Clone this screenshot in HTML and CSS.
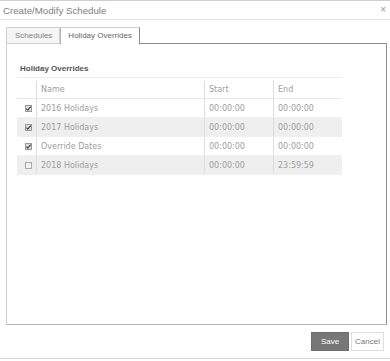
FILE: index.html
```html
<!DOCTYPE html>
<html>
<head>
<meta charset="utf-8">
<link rel="stylesheet" href="styles.css">
</head>
<body>
<div class="dialog">
  <div class="header">
    <span class="title">Create/Modify Schedule</span>
    <span class="close">×</span>
  </div>
  <div class="content">
    <div class="tabs">
      <div class="tab">Schedules</div>
      <div class="tab active">Holiday Overrides</div>
    </div>
    <div class="panel">
      <div class="section-title">Holiday Overrides</div>
      <table class="grid">
        <thead>
          <tr>
            <th class="c-check"></th>
            <th class="c-name">Name</th>
            <th class="c-time">Start</th>
            <th class="c-time">End</th>
          </tr>
        </thead>
        <tbody>
          <tr>
            <td class="c-check"><span class="cb checked"><svg viewBox="0 0 7 7" width="7" height="7"><path d="M1.4 3.6 L2.8 5.1 L5.7 1.7" fill="none" stroke="#444" stroke-width="1.2"/></svg></span></td>
            <td>2016 Holidays</td>
            <td>00:00:00</td>
            <td>00:00:00</td>
          </tr>
          <tr class="alt">
            <td class="c-check"><span class="cb checked"><svg viewBox="0 0 7 7" width="7" height="7"><path d="M1.4 3.6 L2.8 5.1 L5.7 1.7" fill="none" stroke="#444" stroke-width="1.2"/></svg></span></td>
            <td>2017 Holidays</td>
            <td>00:00:00</td>
            <td>00:00:00</td>
          </tr>
          <tr>
            <td class="c-check"><span class="cb checked"><svg viewBox="0 0 7 7" width="7" height="7"><path d="M1.4 3.6 L2.8 5.1 L5.7 1.7" fill="none" stroke="#444" stroke-width="1.2"/></svg></span></td>
            <td>Override Dates</td>
            <td>00:00:00</td>
            <td>00:00:00</td>
          </tr>
          <tr class="alt">
            <td class="c-check"><span class="cb"></span></td>
            <td>2018 Holidays</td>
            <td>00:00:00</td>
            <td>23:59:59</td>
          </tr>
        </tbody>
      </table>
    </div>
  </div>
  <div class="footer">
    <button class="btn btn-save">Save</button>
    <button class="btn btn-cancel">Cancel</button>
  </div>
</div>
</body>
</html>
```

FILE: styles.css
```css
html, body {
  margin: 0;
  padding: 0;
  background: #fff;
}

.dialog {
  width: 390px;
  height: 361px;
  box-sizing: border-box;
  font-family: "Liberation Sans", Arial, sans-serif;
}

.header {
  height: 18px;
  border-top: 1px solid #cfcfcf;
  border-bottom: 1px solid #e6e6e6;
  display: flex;
  align-items: center;
  justify-content: space-between;
  padding: 0 4px 0 3px;
}

.title {
  font-size: 9.7px;
  color: #808080;
}

.close {
  font-size: 10px;
  color: #999;
  line-height: 1;
}

.content {
  padding: 7px 0 0 6px;
}

.tabs {
  display: flex;
  height: 17px;
  position: relative;
  z-index: 1;
  margin-bottom: -1px;
}

.tab {
  box-sizing: border-box;
  height: 17px;
  padding: 0 7px 0 8px;
  font-size: 8px;
  line-height: 15px;
  color: #808080;
  background: #f6f6f6;
  border: 1px solid #cfcfcf;
}

.tab.active {
  background: #fff;
  color: #666;
  padding: 0 7px;
  border-color: #cfcfcf #8f8f8f #fff #b8b8b8;
  height: 18px;
}

.panel {
  box-sizing: border-box;
  width: 381px;
  height: 282px;
  border-top: 1px solid #8f8f8f;
  border-right: 1px solid #8f8f8f;
  border-left: 1px solid #cfcfcf;
  border-bottom: 1px solid #b5b5b5;
  padding: 19px 0 0 10px;
}

.section-title {
  width: 325px;
  font-size: 8px;
  font-weight: bold;
  color: #555;
  line-height: 11px;
  padding: 0 0 3px 3px;
  box-sizing: border-box;
  border-bottom: 1px solid #ececec;
}

.grid {
  margin-top: 3px;
  width: 325px;
  border-collapse: collapse;
  table-layout: fixed;
  font-family: "DejaVu Sans", Verdana, sans-serif;
  font-size: 8px;
  color: #9d9d9d;
}

.grid th,
.grid td {
  padding: 0 0 0 4px;
  text-align: left;
  font-weight: normal;
  border-left: 1px solid #dcdcdc;
  white-space: nowrap;
}

.grid th {
  height: 17px;
  border-bottom: 1px solid #e8e8e8;
}

.grid td {
  height: 18px;
  border-bottom: 1px solid #f0f0f0;
}

.grid .c-check {
  border-left: none;
  width: 15px;
  padding: 0 0 0 4px;
}

.grid .c-name {
  width: 163px;
}

.grid .c-time {
  width: 64px;
}

.grid tr.alt td {
  background: #efefef;
}

.cb {
  display: block;
  box-sizing: border-box;
  width: 7px;
  height: 7px;
  margin-left: 4px;
  border: 1px solid #aaa;
  background: #f2f2f2;
  position: relative;
}

.cb svg {
  position: absolute;
  left: -1px;
  top: -1px;
}

.cb.checked {
  background: #ddd;
  border-color: #999;
}

.footer {
  display: flex;
  justify-content: flex-end;
  gap: 2px;
  padding: 7px 6px 0 0;
  height: 26px;
  border-bottom: 1px solid #d8d8d8;
  box-sizing: content-box;
}

.btn {
  height: 19px;
  margin: 0;
  padding: 0 6px;
  font-family: "Liberation Sans", Arial, sans-serif;
  font-size: 8px;
  box-sizing: border-box;
  border-radius: 0;
}

.btn-save {
  width: 38px;
  background: #777;
  color: #fff;
  border: 1px solid #6e6e6e;
}

.btn-cancel {
  width: 33px;
  padding: 0 2px;
  background: #fff;
  color: #777;
  border: 1px solid #ddd;
}
```
